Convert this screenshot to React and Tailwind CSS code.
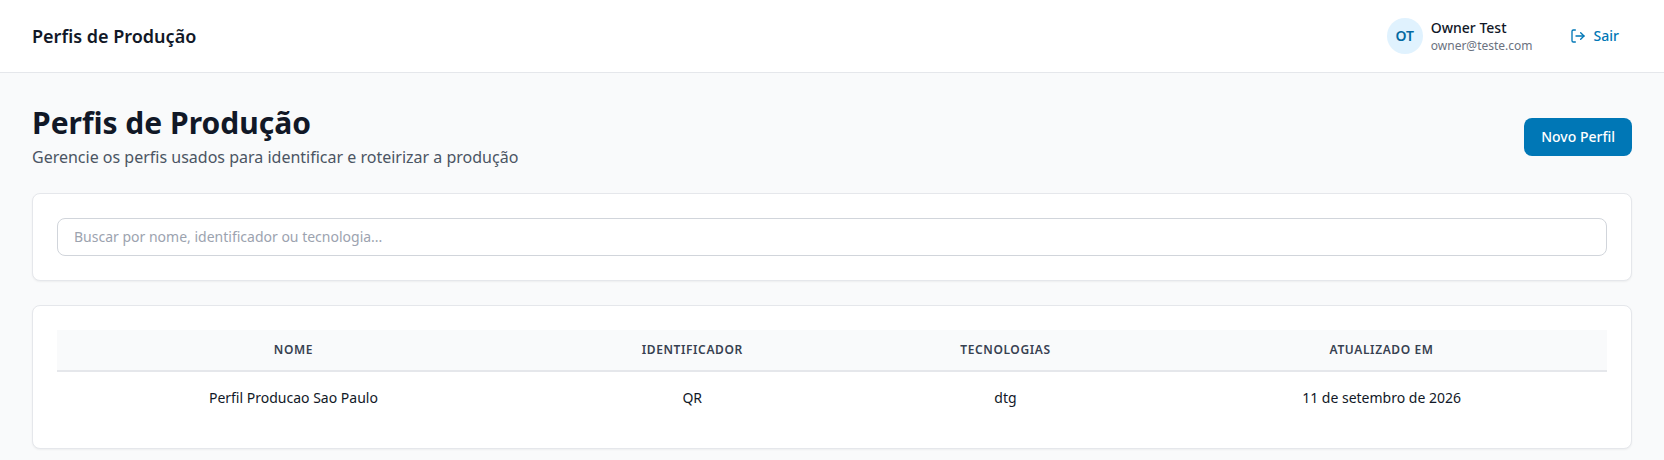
const columns = ['Nome', 'Identificador', 'Tecnologias', 'Atualizado em'];

const profiles = [
  { name: 'Perfil Producao Sao Paulo', id: 'QR', tech: 'dtg', updated: '11 de setembro de 2026' },
];

function LogoutIcon() {
  return (
    <svg className="h-4 w-4" fill="none" stroke="currentColor" strokeWidth="2" strokeLinecap="round" strokeLinejoin="round" viewBox="0 0 24 24" aria-hidden="true">
      <path d="M8 3H5a2 2 0 0 0-2 2v14a2 2 0 0 0 2 2h3" />
      <path d="M16 7l5 5-5 5" />
      <path d="M21 12H9" />
    </svg>
  );
}

function Header() {
  return (
    <header className="flex min-h-[73px] items-center justify-between border-b border-[#e5e7eb] bg-white px-8">
      <div className="text-lg font-semibold text-[#111827]">Perfis de Produção</div>
      <div className="flex items-center gap-6">
        <div className="flex items-center gap-2">
          <div className="flex h-9 w-9 items-center justify-center rounded-full bg-[#e0f2fe] text-sm font-semibold text-[#0369a1]">OT</div>
          <div>
            <p className="text-sm font-medium text-[#111827]">Owner Test</p>
            <p className="text-xs text-[#6b7280]">owner@teste.com</p>
          </div>
        </div>
        <button type="button" className="flex items-center gap-2 rounded-lg border border-transparent px-3 py-2 text-sm font-medium text-[#0077b6]">
          <LogoutIcon />
          Sair
        </button>
      </div>
    </header>
  );
}

function ProfilesTable() {
  return (
    <table className="w-full text-center text-sm">
      <thead className="bg-[#f9fafb]">
        <tr className="border-b-2 border-[#e5e7eb]">
          {columns.map((c) => (
            <th key={c} scope="col" className="px-6 py-3 text-xs font-semibold tracking-wider text-[#374151] uppercase">{c}</th>
          ))}
        </tr>
      </thead>
      <tbody>
        {profiles.map((p) => (
          <tr key={p.name} className="text-[#111827]">
            <td className="px-6 py-4">{p.name}</td>
            <td className="px-6 py-4">{p.id}</td>
            <td className="px-6 py-4">{p.tech}</td>
            <td className="px-6 py-4">{p.updated}</td>
          </tr>
        ))}
      </tbody>
    </table>
  );
}

export default function App() {
  return (
    <div className="min-h-screen bg-[#f9fafb] font-['Noto_Sans',sans-serif]">
      <Header />
      <main className="flex flex-col gap-6 px-8 pt-8 pb-3">
        <div className="flex items-center justify-between">
          <div>
            <h1 className="text-3xl font-bold text-[#111827]">Perfis de Produção</h1>
            <p className="mt-1 text-base text-[#4b5563]">Gerencie os perfis usados para identificar e roteirizar a produção</p>
          </div>
          <button type="button" className="rounded-lg border border-transparent bg-[#0077b6] px-4 py-2 text-sm font-medium text-white">Novo Perfil</button>
        </div>
        <section className="rounded-lg border border-[#e5e7eb] bg-white p-6 shadow-xs">
          <input type="search" aria-label="Buscar perfis" placeholder="Buscar por nome, identificador ou tecnologia..." className="block w-full rounded-lg border border-[#d1d5db] bg-white px-4 py-2 text-sm placeholder:text-[#9ca3af]" />
        </section>
        <section className="rounded-lg border border-[#e5e7eb] bg-white p-6 shadow-xs">
          <ProfilesTable />
        </section>
      </main>
    </div>
  );
}
